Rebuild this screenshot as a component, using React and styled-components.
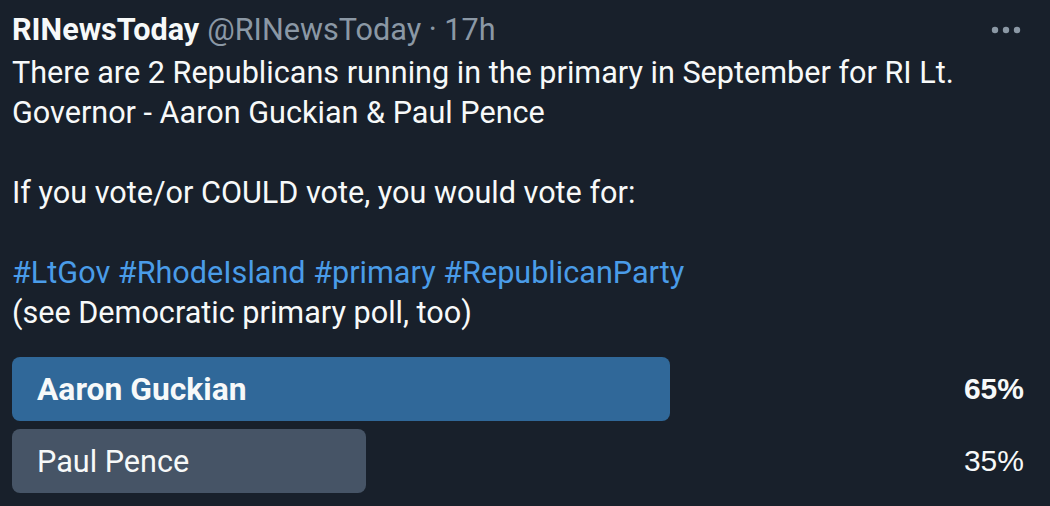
import React from "react";
import styled, { createGlobalStyle } from "styled-components";

const Global = createGlobalStyle`
  html, body { margin: 0; padding: 0; background: #18202b; }
  body { font-family: "Roboto", "Inter", sans-serif; }
`;

const Tweet = styled.article`
  width: 1050px;
  height: 506px;
  box-sizing: border-box;
  padding: 10px 26px 0 12px;
  background: #18202b;
  color: #f7f9f9;
  font-family: "Roboto", "Inter", sans-serif;
  overflow: hidden;
`;

const Header = styled.header`
  display: flex;
  align-items: center;
  height: 40px;
  font-size: 30.6px;
  line-height: 40px;
`;

const Name = styled.span`
  font-weight: 700;
  color: #f7f9f9;
`;

const Meta = styled.span`
  color: #8b98a5;
  margin-left: 8px;
  flex: 1;
`;

const More = styled.svg`
  width: 32px;
  height: 10px;
  margin-right: 2px;
`;

const Body = styled.div`
  margin-top: 3px;
  font-size: 30.6px;
  line-height: 40px;
  white-space: pre-wrap;
`;

const Tag = styled.span`
  color: #4a9ce8;
`;

const Poll = styled.div`
  margin-top: 24px;
  display: flex;
  flex-direction: column;
  gap: 8px;
`;

const Row = styled.div`
  display: flex;
  align-items: center;
  justify-content: space-between;
  height: 64px;
`;

const Bar = styled.div`
  height: 64px;
  box-sizing: border-box;
  padding-left: 25px;
  display: flex;
  align-items: center;
  border-radius: 8px;
  background: ${(p) => (p.$winner ? "#306899" : "#465466")};
  font-size: ${(p) => (p.$winner ? "31.8px" : "30.6px")};
  font-weight: ${(p) => (p.$winner ? 700 : 400)};
  white-space: nowrap;
`;

const Percent = styled.span`
  font-size: 30px;
  font-weight: ${(p) => (p.$winner ? 700 : 400)};
  font-family: "Liberation Sans", "Roboto", sans-serif;
`;

const options = [
  { label: "Aaron Guckian", pct: 65, winner: true },
  { label: "Paul Pence", pct: 35, winner: false },
];

export default function App() {
  return (
    <>
      <Global />
      <Tweet>
        <Header>
          <Name>RINewsToday</Name>
          <Meta>@RINewsToday · 17h</Meta>
          <More viewBox="0 0 32 10" aria-label="More">
            <circle cx="5" cy="5" r="3.2" fill="#8b98a5" />
            <circle cx="16" cy="5" r="3.2" fill="#8b98a5" />
            <circle cx="27" cy="5" r="3.2" fill="#8b98a5" />
          </More>
        </Header>
        <Body>
          {"There are 2 Republicans running in the primary in September for RI Lt.\nGovernor - Aaron Guckian & Paul Pence\n\nIf you vote/or COULD vote, you would vote for:\n\n"}
          <Tag>#LtGov</Tag> <Tag>#RhodeIsland</Tag> <Tag>#primary</Tag>{" "}
          <Tag>#RepublicanParty</Tag>
          {"\n(see Democratic primary poll, too)"}
        </Body>
        <Poll>
          {options.map((o) => (
            <Row key={o.label}>
              <Bar $winner={o.winner} style={{ width: `${o.pct}%` }}>
                {o.label}
              </Bar>
              <Percent $winner={o.winner}>{o.pct}%</Percent>
            </Row>
          ))}
        </Poll>
      </Tweet>
    </>
  );
}
